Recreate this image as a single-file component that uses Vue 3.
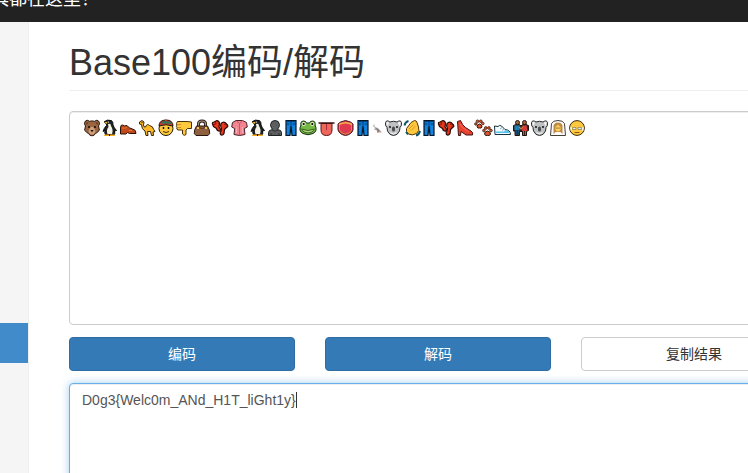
<template>
  <div class="page">
    <nav class="navbar">
      <a class="navbar-brand" href="#">具都在这里！</a>
    </nav>

    <div class="layout">
      <aside class="sidebar">
        <a class="sidebar-active" href="#" aria-label="Base100"></a>
      </aside>

      <main class="main">
        <h1 class="page-header">Base100编码/解码</h1>

        <div class="field">
          <textarea class="form-control" v-model="source" aria-label="Base100"></textarea>
          <div class="emoji-line">
            <svg
              v-for="(name, index) in emojis"
              :key="index"
              :width="emojiWidths[name]"
              height="18"
              :viewBox="`0 0 ${emojiWidths[name]} 18`"
            >
              <use :href="`#${name}`" />
            </svg>
          </div>
        </div>

        <div class="buttons">
          <button type="button" class="btn btn-primary">编码</button>
          <button type="button" class="btn btn-primary">解码</button>
          <button type="button" class="btn btn-default" @click="copyResult">复制结果</button>
        </div>

        <div class="field">
          <textarea
            class="form-control focused"
            v-model="result"
            aria-label="解码"
            spellcheck="false"
          ></textarea>
          <span class="caret"></span>
        </div>
      </main>
    </div>

    <!-- Emoji shapes, one group each -->
    <svg class="sprites" width="0" height="0" aria-hidden="true">
      <defs>
        <g id="bear" stroke-linejoin="round">
          <path d="M2 2.500Q4 0 6.500 2.300Q9 1.500 11.500 2.300Q14 0 16 2.500Q17.300 5 15.500 7L16.400 11Q14.500 14 12.400 14.500Q11.500 16.800 9 16.800Q6.500 16.800 5.600 14.500Q3.500 14 1.600 11L2.500 7Q.700 5 2 2.500Z" fill="#9a6540" stroke="#2b1b12" />
          <path d="M3 4Q4 2 5.500 4L3.500 6ZM15 4Q14 2 12.500 4L14.500 6Z" fill="#6b402a" />
          <path d="M7 9Q9 6.500 11 9L12.500 12Q11.500 15.800 9 15.800Q6.500 15.800 5.500 12Z" fill="#cfa079" />
          <path d="M7.300 11H10.700L9 13.200Z" fill="#1b1717" />
          <circle cx="6" cy="8" r=".9" /><circle cx="12" cy="8" r=".9" />
        </g>
        <g id="penguin">
          <path d="M3 3Q6 0 10.500 1.600Q12.300 3 12 6Q13 9 15.500 11.500L13.500 12Q14.500 15 12.500 16.500H5Q3 14 4 11L2 12.500Q3 9 5.500 6.500L5.300 4.700Z" fill="#202326" stroke="#090909" />
          <path d="M7 5Q10 4 10 7Q12.500 11 11 15H6.500Q5 11 7.500 8Z" fill="#f5f3e8" />
          <path d="M2.800 3.500L6.500 2.800L6 4.800Z" fill="#f5ba29" />
          <path d="M3.500 15.500H8V17H3ZM9 15.500H13.500L14 17H9Z" fill="#f5aa20" />
          <circle cx="7.500" cy="3" r=".6" fill="#fff" />
        </g>
        <g id="loafer" stroke-linejoin="round">
          <path d="M2 6.500L3.500 6Q5.500 7.500 8 6.500Q10 9.500 13.500 10Q17 10.500 17 14.500H10.500L8.500 13.500L7 15H1.500V9Z" fill="#c04a1c" stroke="#281009" />
          <path d="M3 9Q6 9.500 8 8.500M10 11.500L13 11.500" fill="none" stroke="#e57836" />
        </g>
        <g id="camel" stroke-linejoin="round">
          <path d="M1.500 3L4 1.500L6 3L5.500 6Q5.500 8.500 7.500 8Q9 4 11.500 6.500Q15 7 15.700 10.500L17 12.500L15 13L15.500 16.500H13.500L12.500 12.500H9.500L10 16.500H8L7 12Q3.500 10.500 3.500 5.500L1.500 5Z" fill="#fdb827" stroke="#352609" />
          <circle cx="4" cy="3.500" r=".6" />
        </g>
        <g id="capman">
          <circle cx="9" cy="9.500" r="7" fill="#ffc83d" stroke="#211b09" />
          <path d="M2 7Q2 1 9 1Q16 1 16 7Q9 4.500 2 7Z" fill="#d13438" stroke="#211b09" />
          <path d="M4 3.500Q9 0 14 3.500V5Q9 4.200 4 5Z" fill="#2c7654" />
          <path d="M6 12.500Q9 14.500 12 12.500" fill="none" stroke="#453008" />
          <circle cx="6.500" cy="9" r=".9" /><circle cx="11.500" cy="9" r=".9" />
          <circle cx="9" cy="1.500" r="1" fill="#d13438" />
        </g>
        <g id="thumbdown" stroke-linejoin="round">
          <path d="M2.500 2.500H12L16.500 3V9.500H12.500L11 11V15.500Q9 17.500 7.500 15V11H3Q1.200 10.500 2 8.500Q.800 7.500 1.800 6.200Q.800 4.500 2.500 2.500Z" fill="#ffc83d" stroke="#44320c" />
          <path d="M2 5.500H6M2 8.500H6" stroke="#c48214" stroke-width=".8" />
        </g>
        <g id="handbag">
          <path d="M5.500 10V5Q5.500 2 9 2Q12.500 2 12.500 5V10" fill="none" stroke="#2a1b13" stroke-width="3" />
          <path d="M5.500 9V5Q5.500 2 9 2Q12.500 2 12.500 5V9" fill="none" stroke="#a99a8c" stroke-width="1.200" />
          <path d="M3.500 7H14.500Q17 11 16.700 14.500L15 16.500H3L1.300 14.500Q1 11 3.500 7Z" fill="#8e603d" stroke="#281810" />
          <path d="M4 8Q9 11 14 8" fill="none" stroke="#543321" />
          <rect x="4" y="8" width="2" height="2" fill="#f5c44b" /><rect x="12" y="8" width="2" height="2" fill="#f5c44b" />
        </g>
        <g id="feet" stroke-linejoin="round">
          <path d="M1.500 5Q1 3 3 3L6 1.500Q8.500 2 8.500 5L8 8L9.500 10Q9.500 12.500 7.500 12Q6 11.500 5.500 9.500L2.500 7.500Z" fill="#e8381b" stroke="#2a0805" stroke-width="1.200" />
          <path d="M10 4.500Q12 2.500 14 3.500L16.500 6Q17.500 8 15.500 8.500L13.500 10.500L13 14.500Q11.500 17 9.500 15.500Q8.500 14 10 12L10.500 9.500Q9 7 10 4.500Z" fill="#e8381b" stroke="#2a0805" stroke-width="1.200" />
          <path d="M2 5.500L5 5M4 3L5 4.500M14.500 4L13.500 6M16.500 7L14.500 7" stroke="#5c1109" stroke-width=".8" />
        </g>
        <g id="shirt" stroke-linejoin="round">
          <path d="M6 1.500H12.500L16.500 3.500L17.300 8L14.300 9.500L15 15.500Q9.500 17.500 4 15.500L4.700 9.500L1.700 8L2.500 3.500Z" fill="#f28590" stroke="#48232a" />
          <path d="M6.500 2L9.500 4.500L12.500 2M9.500 5V16" fill="none" stroke="#c8566a" />
          <path d="M6.500 8V14M12.500 8V14" stroke="#f9a9b0" />
        </g>
        <g id="silhouette">
          <path d="M1.500 16.500V13.500Q1.500 11 5.500 10.500Q3.500 8 3.500 5.500Q4 1.500 8 1.500Q12 1.500 12.500 5.500Q12.500 8 10.500 10.500Q14.500 11 14.500 13.500V16.500Z" fill="#5c5e60" stroke="#1f2224" />
          <path d="M5 11Q8 13.500 11 11M4 14V16M12 14V16" fill="none" stroke="#313538" />
        </g>
        <g id="jeans">
          <path d="M3 1.500H13V16.500H9L8 7L7 16.500H3Z" fill="#0878d3" stroke="#07172b" stroke-width="1.200" />
          <path d="M3 2.500H13M8 3V6.500M4 5H6M10 5H12" stroke="#053f78" />
          <path d="M5 7V15M11 7V15" stroke="#2490e3" />
        </g>
        <g id="frog">
          <path d="M2 6Q.900 2.500 4.500 2Q7 2 7.500 4H10.500Q11 2 13.500 2Q17.100 2.500 16 6Q19 12 14 14.500Q9 17 4 14.500Q-1 12 2 6Z" fill="#74b943" stroke="#173414" />
          <circle cx="4.700" cy="5" r="2" fill="#e9efcf" /><circle cx="13.300" cy="5" r="2" fill="#e9efcf" />
          <circle cx="4.700" cy="5" r="1.100" /><circle cx="13.300" cy="5" r="1.100" />
          <path d="M2.500 10Q9 13 15.500 10Q14 14 9 14Q4 14 2.500 10Z" fill="#b1d47a" stroke="#284c18" stroke-width=".8" />
        </g>
        <g id="tongue">
          <path d="M4 4.500H15V11Q15 16.500 9.500 16.500Q4 16.500 4 11Z" fill="#ef665d" stroke="#5c1717" />
          <path d="M1.500 4H17.500" stroke="#3d1011" stroke-width="1.500" />
          <path d="M9.500 5V11" stroke="#a32f31" />
        </g>
        <g id="pouch">
          <path d="M4.500 3L9.500 1.500L14.500 3L17 5V11Q15.500 15.500 9.500 16.500Q3.500 15.500 2 11V5Z" fill="#e0394f" stroke="#431620" />
          <path d="M3 5.500Q9.500 2 16 5.500" fill="none" stroke="#f0b04d" stroke-width="1.500" />
          <path d="M3.500 6V11Q5 14.500 9.500 15.200Q14 14.500 15.500 11V6" fill="none" stroke="#c89049" />
        </g>
        <g id="bird">
          <path d="M3 5L4 8L7 9L10 12L10.500 14L7 13L5 11H3L4 9L2 7Z" fill="#b5afb5" />
          <path d="M4 8.500L7 10L9 12.500L7 12Z" fill="#6f7382" />
          <path d="M6 12H8V13.500H6Z" fill="#c37648" />
        </g>
        <g id="koala" stroke-linejoin="round">
          <path d="M6 3Q2.500 .500 1.500 3.500Q1 7 3 8.500L3.500 12Q5.500 16.500 9.500 16.500Q13.500 16.500 15.500 12L16 8.500Q18 7 17.500 3.500Q16.500 .500 13 3Q9.500 1.500 6 3Z" fill="#bfc1c2" stroke="#292c2d" />
          <path d="M2.500 3.500Q4 2 5 4L3.500 7Q2 5.500 2.500 3.500ZM16.500 3.500Q15 2 14 4L15.500 7Q17 5.500 16.500 3.500Z" fill="#f4f2f1" />
          <rect x="8" y="7.500" width="3" height="5" rx="1.500" fill="#4c4e50" />
          <circle cx="6" cy="8" r=".9" /><circle cx="13" cy="8" r=".9" />
          <path d="M6.500 13.500Q9.500 16 12.500 13.500" fill="none" stroke="#eceae8" stroke-width="1.200" />
        </g>
        <g id="clap" stroke-linejoin="round">
          <path d="M1.500 6.500Q2 3 5.500 2M13 16.500Q16 16 17 12" fill="none" stroke="#0f5668" stroke-width="2" />
          <path d="M3.500 9.500L8 3.500L11.500 1.500Q13.500 1.500 14 3.500L15.500 8Q17 12 13.500 14.500Q9 17 5.500 15Q2.500 13 3.500 9.500Z" fill="#ffc83d" stroke="#54370c" />
          <path d="M6 10L10.500 5.500M8 11.500L12.500 7" stroke="#d9962a" />
          <path d="M3 13L5 15.500" stroke="#0f5668" stroke-width="2" />
        </g>
        <g id="heel" stroke-linejoin="round">
          <path d="M1.500 2.500L4.500 1.500Q6.500 6.500 9.500 8.500L15 12Q17.500 13.500 16.500 16H10L5 12.500L4.500 16.500H2.500Z" fill="#e8412f" stroke="#431512" />
          <path d="M4 5Q6.500 10 12.500 12.500" fill="none" stroke="#ff6a52" />
        </g>
        <g id="paws">
          <path d="M3 8Q3 5.500 5.500 5Q8 5.500 8 8Q7.500 9.500 5.500 9Q3.500 9.500 3 8ZM10.500 15Q10.500 12.500 13.500 12Q16.500 12.500 16.500 15Q16 17 13.500 16.500Q11 17 10.500 15Z" fill="#d9552b" stroke="#35170d" />
          <g fill="#d9552b" stroke="#35170d" stroke-width=".7">
            <circle cx="1.900" cy="5" r="1.300" /><circle cx="3.500" cy="2.300" r="1.400" /><circle cx="6.800" cy="2.300" r="1.400" /><circle cx="8.800" cy="4.500" r="1.300" />
            <circle cx="9.900" cy="11.500" r="1.300" /><circle cx="11.800" cy="9" r="1.400" /><circle cx="14.900" cy="9" r="1.400" /><circle cx="17" cy="11.500" r="1.300" />
          </g>
        </g>
        <g id="sneaker" stroke-linejoin="round">
          <path d="M1.500 7L5 7.500Q6.500 5.500 8.500 7L12 10.500Q17.500 11 17.500 15.500H2Z" fill="#f2fafd" stroke="#17313e" />
          <path d="M2 12.500H11L12.500 11Q16.500 12 16.500 14H2Z" fill="#56c1ee" />
          <path d="M7 10L9 8.500M9 11.500L11 10" stroke="#6f9eb5" stroke-width=".8" />
        </g>
        <g id="couple">
          <path d="M1.500 6.500L4 5.500H7.500L9 7L10.500 5.500H14L16.500 6.500V11.500L14.500 12.500V16.500H10.500V12.500H7.500V16.500H3V12H1.500Z" fill="#3b291f" stroke="#20130d" />
          <path d="M2.500 6.500H7.500V11H2.500Z" fill="#1680bb" /><path d="M10.500 6.500H14.500L15.500 12H10Z" fill="#d83b3b" />
          <path d="M3.500 11H5V16H3.500ZM5.800 11H7.300V16H5.800Z" fill="#174d72" />
          <path d="M11 12H12V16H11ZM13 12H14V16H13Z" fill="#a8673e" />
          <circle cx="5.500" cy="3.500" r="2" fill="#a8673e" stroke="#261910" /><circle cx="12.500" cy="3.500" r="2" fill="#a8673e" stroke="#261910" />
          <path d="M7 8L9 10L11 8" fill="none" stroke="#c67e48" stroke-width="1.200" />
        </g>
        <g id="bride" stroke-linejoin="round">
          <path d="M2.500 4.500Q4 1.500 9 1.500Q14 1.500 15.500 4.500L16.500 16.500H1.500Z" fill="#fbfaf8" stroke="#45413b" />
          <path d="M4.500 15V7Q5 3.500 9 3.500Q13 3.500 13.500 7V15L11.500 13H6.500Z" fill="#bd8a45" />
          <path d="M6.500 8L9 5.500L11.500 8V10.500Q11 12.500 9 12.500Q7 12.500 6.500 10.500Z" fill="#ffcf5c" />
          <path d="M6 14.500L9 13L12 14.500V16H6Z" fill="#fff" />
          <circle cx="8" cy="9" r=".5" /><circle cx="10" cy="9" r=".5" />
        </g>
        <g id="oldman">
          <circle cx="9" cy="9" r="7.400" fill="#ffc83d" stroke="#37290d" />
          <path d="M2.300 7.500Q4.500 8 4 10.500L3.200 12.500Q1.800 10 2.300 7.500ZM15.700 7.500Q13.500 8 14 10.500L14.800 12.500Q16.200 10 15.700 7.500Z" fill="#f1f0ea" />
          <path d="M4.500 8.500H8V10.500H4.500ZM10 8.500H13.500V10.500H10Z" fill="#d5eef2" stroke="#8b7d52" stroke-width=".7" />
          <path d="M6.500 13.500H11.500" stroke="#80591a" />
        </g>
      </defs>
    </svg>
  </div>
</template>

<script setup>
import { ref } from 'vue'

const source = ref('')
const result = ref('D0g3{Welc0m_ANd_H1T_liGht1y}')

const emojis = [
  'bear', 'penguin', 'loafer', 'camel', 'capman', 'thumbdown', 'handbag',
  'feet', 'shirt', 'penguin', 'silhouette', 'jeans', 'frog', 'tongue',
  'pouch', 'jeans', 'bird', 'koala', 'clap', 'jeans', 'feet',
  'heel', 'paws', 'sneaker', 'couple', 'koala', 'bride', 'oldman',
]

// Advance width of every emoji
const emojiWidths = {
  bear: 18,
  penguin: 18,
  loafer: 19,
  camel: 19,
  capman: 18,
  thumbdown: 18,
  handbag: 18,
  feet: 19,
  shirt: 19,
  silhouette: 16,
  jeans: 16,
  frog: 18,
  tongue: 19,
  pouch: 19,
  bird: 13,
  koala: 19,
  clap: 18,
  heel: 18,
  paws: 19,
  sneaker: 19,
  couple: 18,
  bride: 19,
  oldman: 18,
}

const copyResult = () => {
  navigator.clipboard?.writeText(result.value)
}
</script>

<style>
body {
  margin: 0;
}
</style>

<style scoped>
.page {
  display: flex;
  flex-direction: column;
  height: 100vh;
  overflow: hidden;
  background: #fff;
  color: #333;
  font-family: 'Liberation Sans', 'Noto Sans CJK SC', sans-serif;
  font-size: 14px;
  line-height: 20px;
}

.page * {
  box-sizing: border-box;
}

/* the page is scrolled a little, the bar is partly out of view */
.navbar {
  flex: none;
  height: 50px;
  margin-top: -28px;
  margin-left: -9px;
  background: #222;
}

.navbar-brand {
  display: block;
  padding-top: 16px;
  color: #fff;
  font-size: 18px;
  line-height: 22px;
  text-decoration: none;
  white-space: nowrap;
}

.layout {
  display: flex;
  flex: 1;
  min-height: 0;
}

.sidebar {
  flex: none;
  width: 29px;
  padding-top: 301px;
  background: #f5f5f5;
  border-right: 1px solid #eee;
}

.sidebar-active {
  display: block;
  height: 40px;
  background: #428bca;
}

.main {
  flex: 1 0 auto;
  padding: 21px 40px 0;
}

.page-header {
  margin: 0 0 20px;
  padding-bottom: 7px;
  border-bottom: 1px solid #eee;
  font-size: 36px;
  font-weight: 400;
  line-height: 40px;
}

.field {
  position: relative;
}

.form-control {
  display: block;
  width: 100%;
  height: 214px;
  margin: 0;
  padding: 6px 12px;
  border: 1px solid #ccc;
  border-radius: 4px;
  outline: none;
  background: #fff;
  box-shadow: inset 0 1px 1px rgba(0, 0, 0, 0.075);
  color: #555;
  font: inherit;
  resize: none;
}

.focused {
  border-color: #66afe9;
  box-shadow:
    inset 0 1px 1px rgba(0, 0, 0, 0.075),
    0 0 8px rgba(102, 175, 233, 0.6);
}

.emoji-line {
  position: absolute;
  top: 8px;
  left: 14px;
  display: flex;
  pointer-events: none;
}

.caret {
  position: absolute;
  top: 9px;
  left: 227px;
  width: 1px;
  height: 16px;
  background: #333;
}

.buttons {
  display: grid;
  grid-template-columns: repeat(3, minmax(226px, 1fr));
  gap: 30px;
  margin: 12px 0;
}

.btn {
  height: 34px;
  padding: 6px 12px;
  border: 1px solid #ccc;
  border-radius: 4px;
  font: inherit;
  cursor: pointer;
}

.btn-primary {
  background: #337ab7;
  border-color: #2e6da4;
  color: #fff;
}

.btn-default {
  background: #fff;
  color: #333;
}

.sprites {
  position: absolute;
}
</style>
